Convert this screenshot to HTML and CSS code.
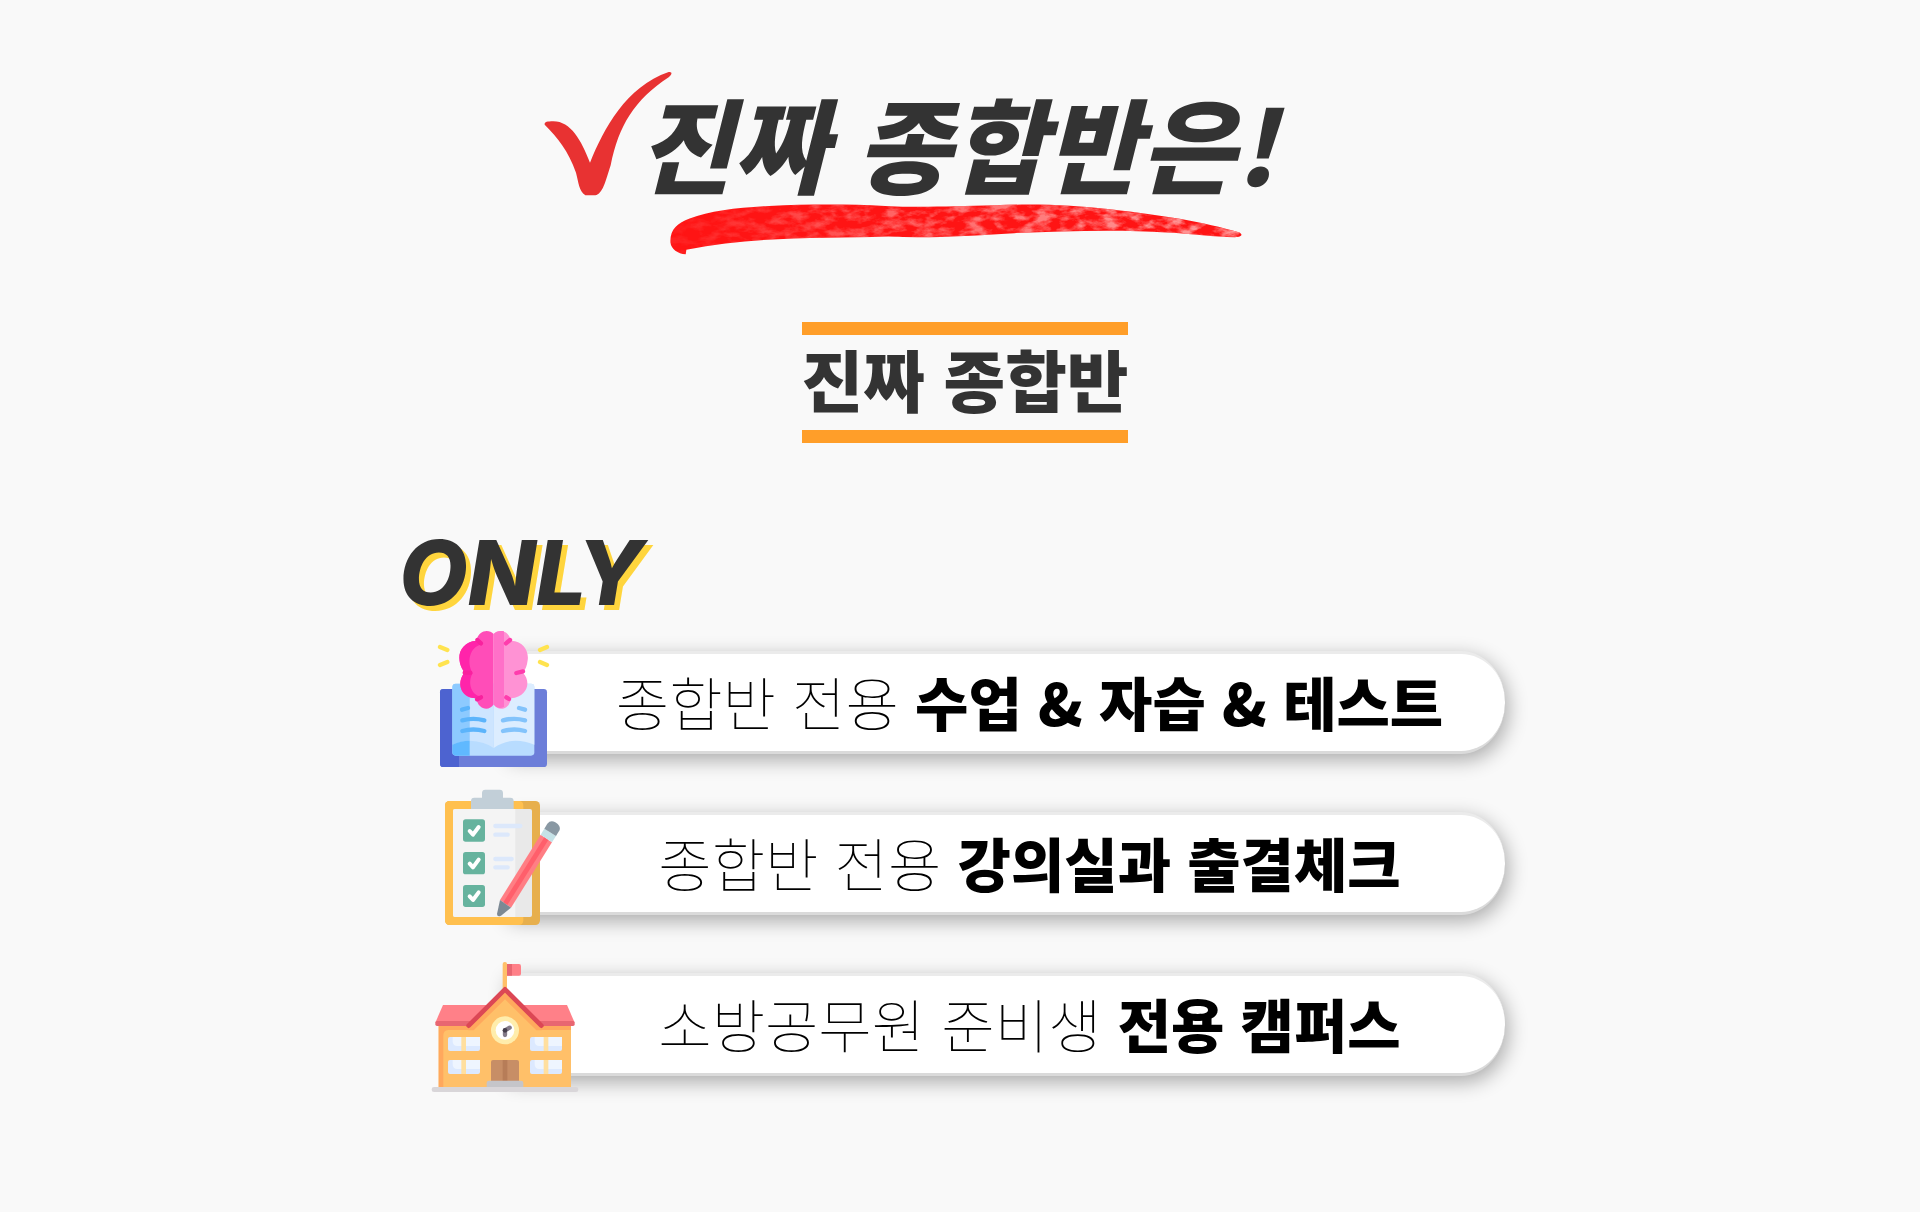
FILE: index.html
```html
<!DOCTYPE html>
<html lang="ko">
<head>
<meta charset="utf-8">
<meta name="viewport" content="width=device-width, initial-scale=1">
<title>진짜 종합반은!</title>
<link rel="stylesheet" href="styles.css">
</head>
<body>
<main class="page">
  <header class="hero">
    <div class="hero-line">
      <svg class="check" viewBox="0 0 384 372" aria-hidden="true">
        <path fill="#e83232" d="M2 158C1 150 8 148 28 148C80 148 112 205 138 272C180 170 245 45 374 0C388 -1 382 10 374 16C270 85 225 160 200 280C184 330 176 366 154 370H124C104 356 104 332 96 302C72 235 42 198 2 158Z"/>
      </svg>
      <h1 class="title">진짜 종합반은!</h1>
    </div>
    <svg class="brush" viewBox="0 0 1728 160" aria-hidden="true">
      <defs>
        <filter id="grain" x="0" y="0" width="1" height="1">
          <feTurbulence type="fractalNoise" baseFrequency="0.02 0.04" numOctaves="4" seed="8"/>
          <feColorMatrix values="0 0 0 0 1  0 0 0 0 .34  0 0 0 0 .34  3 0 0 0 -1.2"/>
          <feComposite in2="SourceGraphic" operator="in"/>
        </filter>
        <linearGradient id="fade"><stop offset="0" stop-color="#fff" stop-opacity=".1"/><stop offset=".4" stop-color="#fff" stop-opacity=".6"/><stop offset="1" stop-color="#fff"/></linearGradient>
        <mask id="fade-mask"><rect width="1728" height="160" fill="url(#fade)"/></mask>
      </defs>
      <path fill="#ff1414" d="M2 116C0 78 22 58 60 44C120 20 210 10 300 6C420 0 540 0 650 6C760 12 860 6 980 4C1110 -2 1220 4 1330 16C1490 34 1610 54 1720 86C1732 94 1724 100 1706 100C1640 100 1580 90 1500 86C1350 76 1190 82 1040 88C900 96 780 104 660 98C460 104 260 96 50 138L48 152C24 150 4 136 2 116Z"/>
      <g mask="url(#fade-mask)"><path filter="url(#grain)" d="M2 116C0 78 22 58 60 44C120 20 210 10 300 6C420 0 540 0 650 6C760 12 860 6 980 4C1110 -2 1220 4 1330 16C1490 34 1610 54 1720 86C1732 94 1724 100 1706 100C1640 100 1580 90 1500 86C1350 76 1190 82 1040 88C900 96 780 104 660 98C460 104 260 96 50 138L48 152C24 150 4 136 2 116Z"/></g>
    </svg>
  </header>

  <h2 class="subtitle">진짜 종합반</h2>

  <section class="only">
    <h3 class="only-title">ONLY</h3>
    <ul class="list">
      <li class="row">
        <p class="pill"><span>종합반 전용 <strong>수업 &amp; 자습 &amp; 테스트</strong></span></p>
        <svg class="icon" viewBox="0 0 480 480" aria-hidden="true">
          <rect x="45" y="207" width="321" height="234" rx="10" fill="#6c7ed9"/>
          <path fill="#4d63d0" d="M55 207H134V405H102V441H55Q45 441 45 431V217Q45 207 55 207Z"/>
          <rect x="82" y="191" width="246" height="216" rx="10" fill="#b8dcff"/>
          <path fill="#dcedff" d="M206 191H318Q328 191 328 201V374Q260 346 206 384Z"/>
          <path fill="#cde5ff" d="M134 191H206V384Q180 364 134 362Z"/>
          <path fill="#8dcaff" d="M92 191H134V362Q108 364 82 374V201Q82 191 92 191Z"/>
          <path fill="#60b9ff" d="M82 374Q108 362 134 362V407H92Q82 407 82 397Z"/>
          <g fill="none" stroke="#5cb4fb" stroke-width="13" stroke-linecap="round"><path d="M111 269L129 264M112 301Q145 292 178 301M112 333Q145 324 178 333"/><path stroke="#83c3fb" d="M282 264L300 269M234 301Q268 292 300 301M234 333Q268 324 300 333"/></g>
          <path fill="#ff4db8" d="M206 42C192 27 162 29 154 62C122 64 102 88 103 114C104 135 111 147 119 158C96 182 101 233 154 235C159 270 193 275 206 253Z"/>
          <path fill="#ff24aa" d="M154 62C122 64 102 88 103 114C104 135 111 147 119 158C96 182 101 233 154 235L171 229C142 231 125 190 143 160C124 127 133 82 170 73Z"/>
          <path fill="#ff92d4" d="M206 42C220 27 250 29 258 62C298 64 312 96 308 121C306 138 302 148 294 158C319 184 309 230 258 235C253 270 219 275 206 253Z"/>
          <path fill="#ff70c8" d="M206 42C213 34 224 31 237 34V260C225 267 212 264 206 253Z"/>
          <g fill="none" stroke="#f9219e" stroke-width="13" stroke-linecap="round"><path d="M157 60L168 70M119 158H136M156 238L168 232"/><path stroke="#ff3dad" d="M255 60L243 70M294 154L274 159M252 237L244 232"/></g>
          <g stroke="#ffe34f" stroke-width="13" stroke-linecap="round"><path d="M45 81L67 90M45 135L67 126M366 81L345 90M366 135L345 126"/></g>
        </svg>
      </li>
      <li class="row">
        <p class="pill"><span>종합반 전용 <strong>강의실과 출결체크</strong></span></p>
        <svg class="icon" viewBox="0 3 480 480" aria-hidden="true">
          <rect x="60" y="63" width="285" height="372" rx="14" fill="#e7af4d"/>
          <path fill="#ffc04f" d="M74 63H282Q295 63 295 77V421Q295 435 281 435H74Q60 435 60 421V77Q60 63 74 63Z"/>
          <rect x="84" y="87" width="237" height="324" rx="6" fill="#e9e9e9"/>
          <path fill="#f4f4f4" d="M90 87H271V411H90Q84 411 84 405V93Q84 87 90 87Z"/>
          <path fill="#c2cfd8" d="M138 87V63Q138 53 148 53H171V39Q171 29 181 29H224Q234 29 234 39V53H256Q266 53 266 63V87Z"/>
          <g fill="#66b39e"><rect x="114" y="118" width="66" height="67" rx="8"/><rect x="114" y="216" width="66" height="67" rx="8"/><rect x="114" y="315" width="66" height="66" rx="8"/></g>
          <g fill="none" stroke="#fff" stroke-width="12" stroke-linecap="round" stroke-linejoin="round"><path d="M134 153L144 164L161 141M134 251L144 262L161 239M134 349L144 360L161 337"/></g>
          <g stroke="#dce8fb" stroke-width="13" stroke-linecap="round"><path d="M211 138H286M211 164H248M211 237H260M211 262H248"/></g>
          <path fill="#ff7e84" d="M347 164L381 187L258 383L225 360Z"/>
          <path fill="#ff5f6b" d="M358 172L370 180L247 375L235 367Z"/>
          <path fill="#c5e2e7" d="M347 164L358 146L393 168L381 187Z"/>
          <path fill="#8998a3" d="M358 146L367 131Q377 119 391 127Q408 138 404 150L393 168Z"/>
          <path fill="#7c8994" d="M225 360L258 383L228 407Q217 413 216 402Z"/>
        </svg>
      </li>
      <li class="row">
        <p class="pill"><span>소방공무원 준비생 <strong>전용 캠퍼스</strong></span></p>
        <svg class="icon" viewBox="0 -39 480 480" aria-hidden="true">
          <rect x="233" y="21" width="13" height="90" rx="6" fill="#ffc069"/>
          <path fill="#ff8088" d="M246 27H282Q288 27 288 34V56Q288 62 282 62H246Z"/><path fill="#e86671" d="M246 27H261V62H246Z"/>
          <path fill="#ffc069" d="M41 200H438V398H41Z"/>
          <path fill="#ffa85d" d="M41 205H438V225H70Q55 226 55 242V398H41Z"/>
          <path fill="#ff8088" d="M54 150H426L449 203H31Z"/>
          <rect x="31" y="198" width="418" height="15" rx="5" fill="#e86671"/>
          <path fill="#ffa85d" d="M240 107L350 218V226H130V218Z"/>
          <path fill="#ffc069" d="M240 133L334 226V260H146V226Z"/>
          <path fill="none" stroke="#dc4755" stroke-width="14" stroke-linecap="round" stroke-linejoin="round" d="M131 212L240 103L349 212"/>
          <circle cx="240" cy="226" r="42" fill="#ffedac"/><circle cx="240" cy="226" r="28" fill="#fff"/>
          <path fill="none" stroke="#837a88" stroke-width="13" stroke-linecap="round" stroke-linejoin="round" d="M240 240V226L254 218"/><circle cx="240" cy="226" r="7" fill="#463f4c"/>
          <g fill="#dce9ff"><rect x="69" y="246" width="96" height="42" rx="6"/><rect x="69" y="315" width="96" height="42" rx="6"/><rect x="315" y="246" width="96" height="42" rx="6"/><rect x="315" y="315" width="96" height="42" rx="6"/></g>
          <g fill="#eef5ff"><path d="M83 246H165V273H97Q83 273 83 259Z"/><path d="M83 315H165V342H97Q83 342 83 328ZM329 246H411V273H343Q329 273 329 259ZM329 315H411V342H343Q329 342 329 328Z"/></g>
          <g fill="#ffdf9f"><path d="M109 246H123V288H109ZM109 315H123V357H109ZM356 246H370V288H356ZM356 315H370V357H356Z"/></g>
          <rect x="198" y="315" width="84" height="70" rx="6" fill="#c78e66"/><path fill="#b77d58" d="M233 315H247V380H233Z"/>
          <path fill="#c5c5c9" d="M185 398V384Q185 377 192 377H288Q295 377 295 384V398Z"/>
          <rect x="20" y="396" width="440" height="15" rx="7" fill="#d9d6d9"/>
        </svg>
      </li>
    </ul>
  </section>
</main>
</body>
</html>
```
FILE: styles.css
```css
* {
  box-sizing: border-box;
  margin: 0;
  padding: 0;
}

body {
  background: #f9f9f9;
  color: #333;
  font-family: "Noto Sans CJK KR", "Noto Sans", sans-serif;
}

.page {
  display: flex;
  flex-direction: column;
  align-items: center;
  max-width: 1122px;
  margin: 0 auto;
  padding: 72px 0 120px;
}

.hero {
  position: relative;
  margin-right: 100px;
}

.hero-line {
  display: flex;
  align-items: flex-start;
}

.check {
  flex: none;
  width: 128px;
  height: 124px;
  margin-right: -34px;
}

.title {
  padding-top: 10px;
  font-size: 103px;
  font-weight: 900;
  font-style: italic;
  line-height: 120px;
  white-space: nowrap;
}

.brush {
  position: absolute;
  left: 124px;
  top: 132px;
  width: 576px;
  height: 53px;
}

.subtitle {
  margin: 120px 0 0 10px;
  padding: 8px 0 18px;
  border: solid #ff9e29;
  border-width: 13px 0;
  font-size: 67px;
  font-weight: 900;
  line-height: 69px;
  white-space: nowrap;
}

.only {
  width: 100%;
  margin-top: 82px;
}

.only-title {
  font-family: Inter, sans-serif;
  font-size: 89px;
  font-weight: 800;
  font-style: italic;
  line-height: 96px;
  text-shadow: 5px 5px 0 #ffd53d;
}

.list {
  margin-top: 30px;
  display: grid;
  gap: 58px;
  list-style: none;
}

.row {
  position: relative;
}

.pill {
  display: flex;
  align-items: center;
  justify-content: center;
  min-height: 103px;
  margin: 0 16px 0 107px;
  padding: 0 0 3px 48px;
  border: solid #ebebeb;
  border-width: 3px 0;
  border-bottom-color: #dadada;
  border-radius: 4px 44px 44px 4px / 4px 51px 51px 4px;
  background: #fff;
  box-shadow: 3px 6px 20px rgba(0, 0, 0, 0.32);
  color: #000;
  font-size: 58px;
  font-weight: 100;
  line-height: 80px;
}

.pill strong {
  font-weight: 900;
}

.icon {
  position: absolute;
  left: 26px;
  top: -31px;
  width: 160px;
  height: 160px;
}
```
